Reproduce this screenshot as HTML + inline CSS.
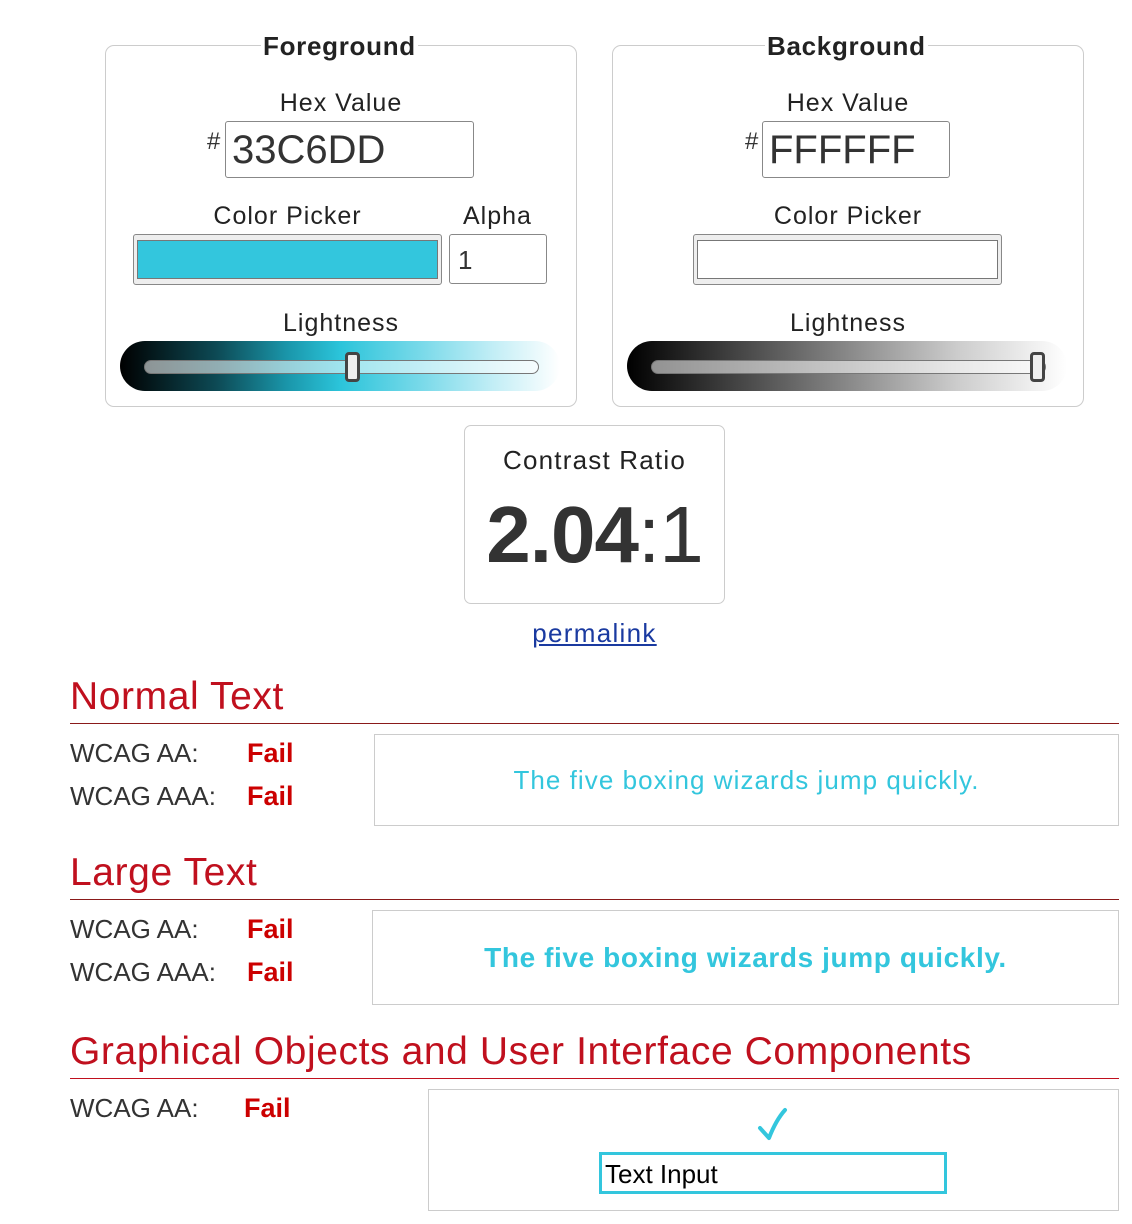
<!DOCTYPE html>
<html><head><meta charset="utf-8"><style>
*{margin:0;padding:0;box-sizing:border-box}
body{width:1132px;height:1224px;background:#fff;position:relative;font-family:"Liberation Sans",sans-serif;color:#333;overflow:hidden}
.a{position:absolute;white-space:nowrap}
.c{text-align:center}
.box{position:absolute;border:1px solid #ccc;border-radius:9px}
.leg{position:absolute;background:#fff;font-weight:bold;font-size:26px;line-height:30px;padding:0 2px;color:#222;letter-spacing:0.7px}
.lbl{font-size:25px;line-height:30px;color:#222;letter-spacing:1px}
.inp{position:absolute;border:1px solid #888;border-radius:3px;background:#fff}
.slider{position:absolute;height:50px;border-radius:25px}
.track{position:absolute;height:14px;border:1px solid #777;border-radius:7px;background:rgba(255,255,255,.55)}
.thumb{position:absolute;width:15px;height:30px;border:3px solid #444;border-radius:4px;background:#eee}
.h{position:absolute;left:70px;font-size:39px;line-height:44px;color:#c0101e;letter-spacing:0.6px}
.rule{position:absolute;left:70px;width:1049px;height:1px;background:#8a1a1a}
.w{position:absolute;left:70px;font-size:26px;line-height:30px;color:#333}
.f{position:absolute;font-size:27px;line-height:30px;font-weight:bold;color:#c00}
.sample{position:absolute;border:1px solid #ccc;color:#33c6dd;display:flex;align-items:center;justify-content:center}
</style></head><body>

<!-- Foreground -->
<div class="box" style="left:105px;top:45px;width:472px;height:362px"></div>
<div class="leg" style="left:261px;top:31px">Foreground</div>
<div class="a c lbl" style="left:105px;width:472px;top:88px">Hex Value</div>
<div class="a" style="left:207px;top:128px;font-size:24px">#</div>
<div class="inp" style="left:225px;top:121px;width:249px;height:57px"><span class="a" style="left:6px;top:6px;font-size:40px;line-height:44px">33C6DD</span></div>
<div class="a c lbl" style="left:133px;width:309px;top:201px">Color Picker</div>
<div class="a lbl" style="left:463px;top:201px">Alpha</div>
<div class="a" style="left:133px;top:234px;width:309px;height:51px;border:1px solid #888;border-radius:3px;background:#eee"><div style="position:absolute;left:3px;top:5px;width:301px;height:39px;background:#33c6dd;border:1px solid #777"></div></div>
<div class="inp" style="left:449px;top:234px;width:98px;height:50px"><span class="a" style="left:8px;top:10px;font-size:26px">1</span></div>
<div class="a c lbl" style="left:105px;width:472px;top:308px">Lightness</div>
<div class="slider" style="left:120px;top:341px;width:440px;background:linear-gradient(90deg,#000 0%,#0d4a55 22%,#1a96aa 38%,#2bc4da 50%,#77d9e9 68%,#c3eef6 85%,#fff 100%)"></div>
<div class="track" style="left:144px;top:360px;width:395px"></div>
<div class="thumb" style="left:345px;top:352px"></div>

<!-- Background -->
<div class="box" style="left:612px;top:45px;width:472px;height:362px"></div>
<div class="leg" style="left:765px;top:31px">Background</div>
<div class="a c lbl" style="left:612px;width:472px;top:88px">Hex Value</div>
<div class="a" style="left:745px;top:128px;font-size:24px">#</div>
<div class="inp" style="left:762px;top:121px;width:188px;height:57px"><span class="a" style="left:6px;top:6px;font-size:40px;line-height:44px">FFFFFF</span></div>
<div class="a c lbl" style="left:612px;width:472px;top:201px">Color Picker</div>
<div class="a" style="left:693px;top:234px;width:309px;height:51px;border:1px solid #888;border-radius:3px;background:#eee"><div style="position:absolute;left:3px;top:5px;width:301px;height:39px;background:#fff;border:1px solid #777"></div></div>
<div class="a c lbl" style="left:612px;width:472px;top:308px">Lightness</div>
<div class="slider" style="left:627px;top:341px;width:440px;background:linear-gradient(90deg,#000 0%,#444 25%,#888 50%,#ccc 75%,#fff 100%)"></div>
<div class="track" style="left:651px;top:360px;width:395px"></div>
<div class="thumb" style="left:1030px;top:352px"></div>

<!-- Contrast -->
<div class="box" style="left:464px;top:425px;width:261px;height:179px;border-radius:7px"></div>
<div class="a c lbl" style="left:464px;width:261px;top:445px;font-size:26px;letter-spacing:1.2px">Contrast Ratio</div>
<div class="a c" style="left:464px;width:261px;top:492px;font-size:80px;line-height:86px;color:#333;letter-spacing:-1px"><b>2.04</b>:1</div>
<div class="a c" style="left:464px;width:261px;top:618px;font-size:26px;line-height:30px;color:#1a3aa0;text-decoration:underline;letter-spacing:1.3px">permalink</div>

<!-- Normal -->
<div class="h" style="top:675px">Normal Text</div>
<div class="rule" style="top:723px"></div>
<div class="w" style="top:738px">WCAG AA:</div><div class="f" style="left:247px;top:738px">Fail</div>
<div class="w" style="top:781px">WCAG AAA:</div><div class="f" style="left:247px;top:781px">Fail</div>
<div class="sample" style="left:374px;top:734px;width:745px;height:92px;font-size:26px;letter-spacing:1.05px">The five boxing wizards jump quickly.</div>

<!-- Large -->
<div class="h" style="top:851px">Large Text</div>
<div class="rule" style="top:899px"></div>
<div class="w" style="top:914px">WCAG AA:</div><div class="f" style="left:247px;top:914px">Fail</div>
<div class="w" style="top:957px">WCAG AAA:</div><div class="f" style="left:247px;top:957px">Fail</div>
<div class="sample" style="left:372px;top:910px;width:747px;height:95px;font-size:28px;font-weight:bold;letter-spacing:0.6px">The five boxing wizards jump quickly.</div>

<!-- Graphical -->
<div class="h" style="top:1030px">Graphical Objects and User Interface Components</div>
<div class="rule" style="top:1078px;background:#c0101e"></div>
<div class="w" style="top:1093px">WCAG AA:</div><div class="f" style="left:244px;top:1093px">Fail</div>
<div class="a" style="left:428px;top:1089px;width:691px;height:122px;border:1px solid #ccc"></div>
<svg class="a" style="left:756px;top:1106px" width="34" height="36" viewBox="0 0 34 36"><path d="M4 22 L13 32 Q20 14 29 4" fill="none" stroke="#33c6dd" stroke-width="4" stroke-linecap="round" stroke-linejoin="round"/></svg>
<div class="a" style="left:599px;top:1152px;width:348px;height:42px;border:3px solid #33c6dd;background:#fff"><span class="a" style="left:3px;top:4px;font-size:26px;line-height:30px;color:#000">Text Input</span></div>
</body></html>
